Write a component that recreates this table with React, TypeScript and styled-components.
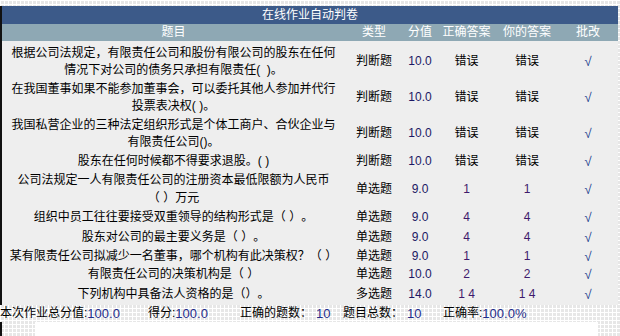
import React from "react";
import styled, { createGlobalStyle } from "styled-components";

const GlobalStyle = createGlobalStyle`
  html, body { margin: 0; padding: 0; }
  body {
    width: 620px;
    height: 336px;
    overflow: hidden;
    background-color: #e7e7e7;
    background-image:
      linear-gradient(#ffffff 1px, transparent 1px),
      linear-gradient(90deg, #ffffff 1px, transparent 1px);
    background-size: 4px 4px;
    font-family: "Liberation Sans", "Noto Sans CJK SC", sans-serif;
    font-size: 12px;
    color: #000;
    text-spacing-trim: space-all;
  }
`;

const Page = styled.div`
  padding-top: 6px;
  width: 620px;
`;

const Frame = styled.div`
  border-left: 2px solid #111;
  width: 616px;
`;

const Table = styled.table`
  width: 616px;
  border-collapse: collapse;
  border-spacing: 0;
  table-layout: fixed;
  background: #eeeeee;
`;

const TitleCell = styled.td`
  height: 18px;
  padding: 0;
  background: #3c5a89;
  color: #fff;
  text-align: center;
  line-height: 18px;
  font-size: 12px;
`;

const HeadCell = styled.th`
  height: 17px;
  padding: 0;
  background: #8ea8b4;
  color: #fff;
  font-weight: normal;
  text-align: center;
  line-height: 17px;
  white-space: nowrap;
`;

const BodyRow = styled.tr<{ $h: number; $top: number }>`
  height: ${(p) => p.$h}px;

  & > td {
    padding-top: ${(p) => p.$top}px;
  }
`;

const Cell = styled.td<{ $tone?: "score" | "answer" | "check" }>`
  padding: 0;
  text-align: center;
  vertical-align: middle;
  line-height: 17.5px;
  white-space: nowrap;
  font-size: ${(p) => (p.$tone === "check" ? "13px" : "12px")};
  color: ${(p) =>
    p.$tone === "score"
      ? "#1c1864"
      : p.$tone === "answer"
      ? "#3e1a6c"
      : p.$tone === "check"
      ? "#23408f"
      : "#000"};
`;

const Footer = styled.div`
  display: grid;
  grid-template-columns: 148px 92px 103px 100px auto;
  height: 17px;
  line-height: 17px;
  white-space: nowrap;
`;

const FooterItem = styled.span`
  display: inline-flex;
  align-items: center;
`;

const Num = styled.span<{ $gap?: number }>`
  color: #1f2d8c;
  font-size: 13px;
  margin-left: ${(p) => p.$gap ?? 0}px;
`;

const BottomRow = styled.div`
  display: flex;
  height: 14px;
  border-left: 2px solid #111;
`;

const BlankBox = styled.div`
  margin-left: 33px;
  width: 563px;
  background: #ffffff;
`;

type Row = {
  q: string[];
  type: string;
  score: string;
  correct: string;
  mine: string;
  h: number;
  top?: number;
};

const rows: Row[] = [
  {
    q: [
      "根据公司法规定，有限责任公司和股份有限公司的股东在任何",
      "情况下对公司的债务只承担有限责任(\u00a0\u00a0)。",
    ],
    type: "判断题",
    score: "10.0",
    correct: "错误",
    mine: "错误",
    h: 39,
    top: 3,
  },
  {
    q: [
      "在我国董事如果不能参加董事会，可以委托其他人参加并代行",
      "投票表决权(\u00a0)。",
    ],
    type: "判断题",
    score: "10.0",
    correct: "错误",
    mine: "错误",
    h: 36,
  },
  {
    q: [
      "我国私营企业的三种法定组织形式是个体工商户、合伙企业与",
      "有限责任公司()。",
    ],
    type: "判断题",
    score: "10.0",
    correct: "错误",
    mine: "错误",
    h: 36,
  },
  {
    q: ["股东在任何时候都不得要求退股。(\u00a0)"],
    type: "判断题",
    score: "10.0",
    correct: "错误",
    mine: "错误",
    h: 19,
  },
  {
    q: ["公司法规定一人有限责任公司的注册资本最低限额为人民币", "（\u00a0）万元"],
    type: "单选题",
    score: "9.0",
    correct: "1",
    mine: "1",
    h: 37,
  },
  {
    q: ["组织中员工往往要接受双重领导的结构形式是（\u00a0）。"],
    type: "单选题",
    score: "9.0",
    correct: "4",
    mine: "4",
    h: 20,
  },
  {
    q: ["股东对公司的最主要义务是（\u00a0）。"],
    type: "单选题",
    score: "9.0",
    correct: "4",
    mine: "4",
    h: 19,
    top: 1,
  },
  {
    q: ["某有限责任公司拟减少一名董事，哪个机构有此决策权？（\u00a0）"],
    type: "单选题",
    score: "9.0",
    correct: "1",
    mine: "1",
    h: 19,
  },
  {
    q: ["有限责任公司的决策机构是（\u00a0）"],
    type: "单选题",
    score: "10.0",
    correct: "2",
    mine: "2",
    h: 18,
  },
  {
    q: ["下列机构中具备法人资格的是（）。"],
    type: "多选题",
    score: "14.0",
    correct: "1\u00a04",
    mine: "1\u00a04",
    h: 21,
  },
];

const isLatin = (s: string) => /^[0-9.\s\u00a0]+$/.test(s);

export default function App() {
  return (
    <>
      <GlobalStyle />
      <Page>
        <Frame>
          <Table>
            <colgroup>
              <col style={{ width: 343 }} />
              <col style={{ width: 58 }} />
              <col style={{ width: 34 }} />
              <col style={{ width: 59 }} />
              <col style={{ width: 62 }} />
              <col style={{ width: 60 }} />
            </colgroup>
            <thead>
              <tr>
                <TitleCell colSpan={6}>在线作业自动判卷</TitleCell>
              </tr>
              <tr>
                <HeadCell>题目</HeadCell>
                <HeadCell>类型</HeadCell>
                <HeadCell>分值</HeadCell>
                <HeadCell>正确答案</HeadCell>
                <HeadCell>你的答案</HeadCell>
                <HeadCell>批改</HeadCell>
              </tr>
            </thead>
            <tbody>
              {rows.map((r, i) => (
                <BodyRow key={i} $h={r.h} $top={r.top ?? 0}>
                  <Cell>
                    {r.q.map((line, j) => (
                      <React.Fragment key={j}>
                        {j > 0 && <br />}
                        {line}
                      </React.Fragment>
                    ))}
                  </Cell>
                  <Cell>{r.type}</Cell>
                  <Cell $tone="score">{r.score}</Cell>
                  <Cell $tone={isLatin(r.correct) ? "answer" : undefined}>{r.correct}</Cell>
                  <Cell $tone={isLatin(r.mine) ? "answer" : undefined}>{r.mine}</Cell>
                  <Cell $tone="check">√</Cell>
                </BodyRow>
              ))}
            </tbody>
          </Table>
        </Frame>
        <Footer>
          <FooterItem>
            本次作业总分值:<Num>100.0</Num>
          </FooterItem>
          <FooterItem>
            得分:<Num>100.0</Num>
          </FooterItem>
          <FooterItem>
            正确的题数：<Num $gap={4}>10</Num>
          </FooterItem>
          <FooterItem>
            题目总数：<Num $gap={4}>10</Num>
          </FooterItem>
          <FooterItem>
            正确率:<Num>100.0%</Num>
          </FooterItem>
        </Footer>
        <BottomRow>
          <BlankBox />
        </BottomRow>
      </Page>
    </>
  );
}
